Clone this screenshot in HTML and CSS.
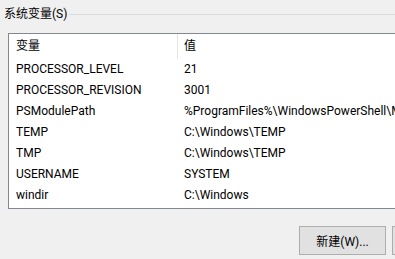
FILE: index.html
```html
<!DOCTYPE html>
<html lang="zh-CN">
<head>
  <meta charset="UTF-8">
  <title>系统变量</title>
  <link rel="stylesheet" href="styles.css">
</head>
<body>
  <div class="group">
    <div class="group-title">
      <span class="group-label">系统变量(S)</span>
      <span class="group-line"></span>
    </div>

    <div class="listview">
      <div class="lv-header">
        <div class="col-name">变量</div>
        <div class="col-value">值</div>
      </div>
      <div class="lv-row"><div class="col-name">PROCESSOR_LEVEL</div><div class="col-value">21</div></div>
      <div class="lv-row"><div class="col-name">PROCESSOR_REVISION</div><div class="col-value">3001</div></div>
      <div class="lv-row"><div class="col-name">PSModulePath</div><div class="col-value">%ProgramFiles%\WindowsPowerShell\Modules;C:\Windows\system32\WindowsPowerShell\v1.0\Modules</div></div>
      <div class="lv-row"><div class="col-name">TEMP</div><div class="col-value">C:\Windows\TEMP</div></div>
      <div class="lv-row"><div class="col-name">TMP</div><div class="col-value">C:\Windows\TEMP</div></div>
      <div class="lv-row"><div class="col-name">USERNAME</div><div class="col-value">SYSTEM</div></div>
      <div class="lv-row"><div class="col-name">windir</div><div class="col-value">C:\Windows</div></div>
    </div>

    <div class="buttons">
      <button class="btn">新建(W)...</button>
      <button class="btn">编辑(I)...</button>
    </div>
  </div>
</body>
</html>
```

FILE: styles.css
```css
body {
  margin: 0;
  width: 395px;
  height: 259px;
  overflow: hidden;
  background-color: #f0f0f0;
  color: #000;
  font-family: Roboto, "Noto Sans CJK SC", sans-serif;
  font-size: 12px;
}
.group {
  width: 600px;
}
.group-title {
  display: flex;
  align-items: center;
  height: 16px;
  margin-top: 6px;
  padding-left: 4px;
}
.group-label {
  line-height: 16px;
  white-space: nowrap;
}
.group-line {
  flex: 1;
  height: 1px;
  margin-left: 2px;
  background-color: #dcdcdc;
}
.listview {
  margin-top: 11px;
  margin-left: 8px;
  height: 174px;
  border: 1px solid #828790;
  background-color: #fff;
  overflow: hidden;
}
.lv-header,
.lv-row {
  display: flex;
  white-space: nowrap;
}
.lv-header {
  height: 25px;
  line-height: 24px;
}
.lv-row {
  height: 21px;
  line-height: 21px;
}
.col-name {
  box-sizing: border-box;
  width: 169px;
  padding-left: 7px;
  flex-shrink: 0;
}
.col-value {
  padding-left: 6px;
}
.lv-header .col-name {
  border-right: 1px solid #e5e5e5;
}
.buttons {
  display: flex;
  gap: 6px;
  margin-top: 17px;
  padding-left: 299px;
}
.btn {
  width: 87px;
  height: 29px;
  margin: 0;
  padding: 0;
  background-color: #e1e1e1;
  border: 1px solid #adadad;
  color: #000;
  font-family: Roboto, "Noto Sans CJK SC", sans-serif;
  font-size: 12px;
  flex-shrink: 0;
}
```
